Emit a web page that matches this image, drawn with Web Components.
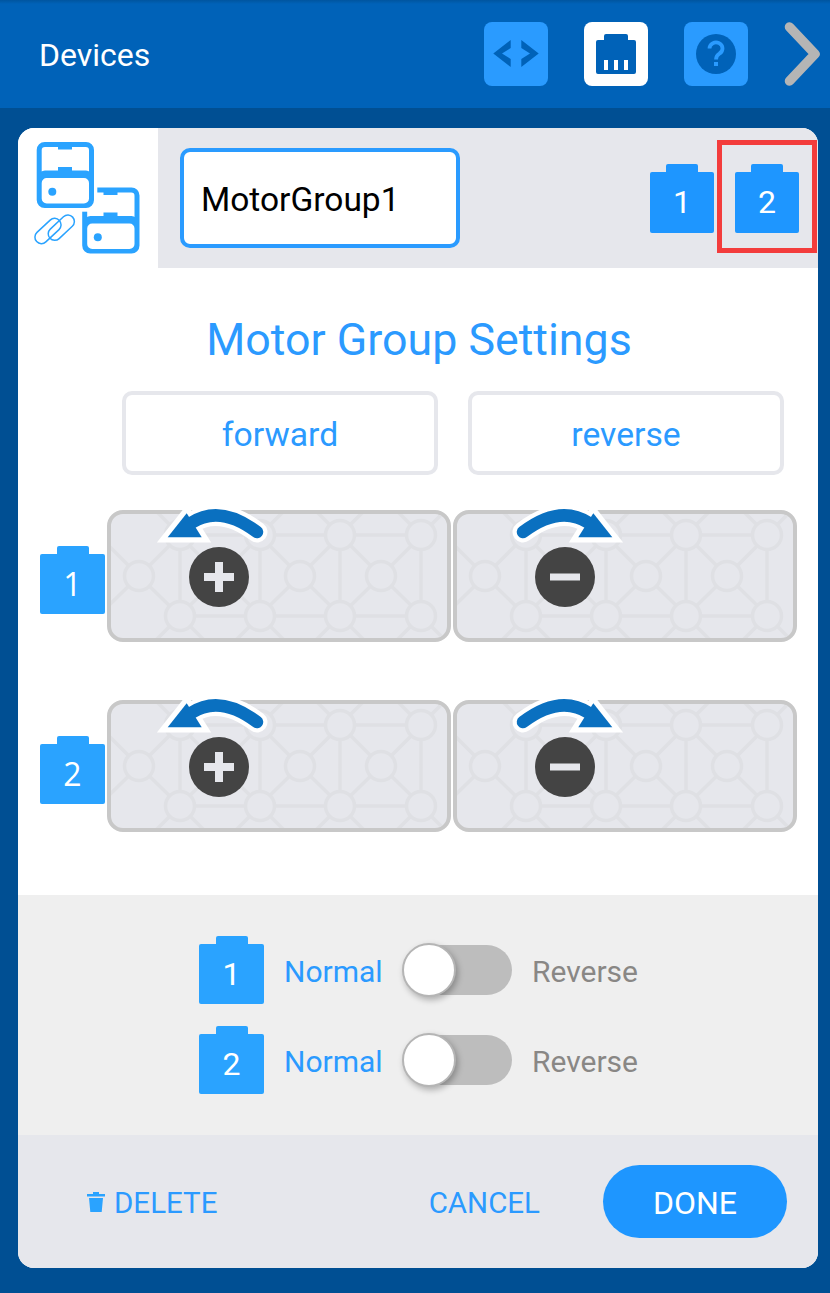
<!DOCTYPE html>
<html><head><meta charset="utf-8"><title>Devices</title>
<style>
html,body{margin:0;padding:0;background:#004f93;font-family:Roboto,sans-serif}
</style></head>
<body>
<x-app></x-app>
<script>
function def(name, html){
  customElements.define(name, class extends HTMLElement{
    connectedCallback(){
      if(this.shadowRoot) return;
      const r=this.attachShadow({mode:'open'});
      r.innerHTML=typeof html==='function'?html(this):html;
    }
  });
}
def('x-motor', el=>{
  const c=el.getAttribute('color')||'#2aa3ff';
  const f=el.getAttribute('font')||'Roboto';
  const w=el.getAttribute('w')||65;
  const h=+(el.getAttribute('h')||68);
  return `<style>
  :host{display:block;width:${w}px;height:${h}px;flex:none;font-family:${f},sans-serif}
  .nub{width:32px;height:9px;margin:0 auto -1px;background:${c};border-radius:2px 2px 0 0}
  .body{height:${h-8}px;background:${c};border-radius:2px;display:flex;align-items:center;justify-content:center;color:#fff;font-size:32px;line-height:1}
  span{display:block;margin-top:-1px}
  </style><div class="nub"></div><div class="body"><span><slot></slot></span></div>`;
});
def('x-topbar',`<style>
  :host{display:flex;align-items:center;height:108px;padding-left:39px;box-sizing:border-box;background:linear-gradient(#00559f 0,#0062b8 4px);color:#fff}
  .t{flex:1;font-size:32px;line-height:36px;margin-top:2px}
  .b{width:64px;height:64px;border-radius:8px;background:#2a9bff;margin-right:36px;flex:none}
  .b.on{background:#fff}
  svg{display:block}
  .chev{margin-right:10px;margin-left:-4px;flex:none}
</style>
<div class="t">Devices</div>
<div class="b"><svg width="64" height="64" viewBox="0 0 64 64"><path fill="#0062b8" d="M26.7 18 9.3 31.5 26.7 45V37L18 31.5 26.7 26ZM37.3 18 54.7 31.5 37.3 45V37L46 31.5 37.3 26Z"/></svg></div>
<div class="b on"><svg width="64" height="64" viewBox="0 0 64 64"><path fill="#0062b8" d="M22 12H42a2 2 0 0 1 2 2V18H50a2 2 0 0 1 2 2V50a2 2 0 0 1-2 2H14a2 2 0 0 1-2-2V20a2 2 0 0 1 2-2H20V14a2 2 0 0 1 2-2Z"/><path fill="#fff" d="M20 38h4v10h-4zM30 38h4v10h-4zM40 38h4v10h-4z"/></svg></div>
<div class="b"><svg width="64" height="64" viewBox="0 0 64 64"><circle cx="32" cy="32" r="20" fill="#0062b8"/><path fill="none" stroke="#2a9bff" stroke-width="3.800" d="M25.500 26.500a6.500 6 0 1 1 10 5c-2.400 1.600-3.500 2.500-3.500 6"/><rect x="30" y="40" width="4" height="4" fill="#2a9bff"/></svg></div>
<svg class="chev" width="40" height="64" viewBox="0 0 40 64"><path fill="none" stroke="#b5b5b5" stroke-width="9.500" stroke-linecap="round" stroke-linejoin="round" d="M9.500 5 35 32 9.500 59"/></svg>`);
const mot=`<path fill-rule="evenodd" d="M26.700 14H68a8 8 0 0 1 8 8V72a8 8 0 0 1-8 8H26.700a8 8 0 0 1-8-8V22a8 8 0 0 1 8-8ZM27 19a3.300 3.300 0 0 0-3.300 3.300V43.500Q24 43 27 42.500H40V39H54V42.500H68Q71 43 71 43.500V22.300A3.300 3.300 0 0 0 67.700 19H54V21.500H40V19ZM28.700 50a5 5 0 0 0-5 5V70.500a5 5 0 0 0 5 5H66a5 5 0 0 0 5-5V55a5 5 0 0 0-5-5Z"/><circle cx="34.300" cy="63.700" r="4"/>`;
def('x-grouphead',`<style>
  :host{display:flex;height:140px;position:relative;flex:none}
  .logo{width:140px;background:#fff;flex:none}
  svg{display:block}
  .rest{flex:1;background:#e6e7ec;display:flex;align-items:center;padding:0 19px 0 22px;gap:21px}
  .name{width:280px;height:100px;box-sizing:border-box;border:4px solid #2a9bff;border-radius:10px;background:#fff;display:flex;align-items:center;padding-left:17px;font-size:33.500px;color:#000;margin-right:auto}
  .name span{margin-top:2px}
  .red{position:absolute;left:699px;top:12px;width:100px;height:113px;box-sizing:border-box;border:5px solid #f33c3c}
</style>
<div class="logo"><svg width="140" height="140" viewBox="0 0 140 140">
 <g fill="#2aa3ff">
  <g transform="translate(45.500 45.500)">${mot}</g>
  <rect x="55" y="55" width="24.300" height="28.700" fill="#fff"/>
  ${mot}
 </g>
 <g fill="none" stroke="#2aa3ff" stroke-width="1.500">
  <rect x="-15.500" y="-6.500" width="31" height="13" rx="6.500" transform="translate(30 103) rotate(-43)"/>
  <rect x="-15.500" y="-6.500" width="31" height="13" rx="6.500" transform="translate(43.300 99.700) rotate(-43)"/>
 </g></svg></div>
<div class="rest"><div class="name"><span>MotorGroup1</span></div>
<x-motor color="#1e96ff" w="64" h="69">1</x-motor><x-motor color="#1e96ff" w="64" h="69">2</x-motor></div>
<div class="red"></div>`);
const pts=[[32,66],[113,66],[193,66],[274,66],[73,25],[153,25],[233,25],[314,25],[73,106],[153,106],[233,106],[314,106]];
let lines='';
[[73,25,153,25],[153,25,233,25],[233,25,314,25],[73,106,153,106],[153,106,233,106],[233,106,314,106],
 [73,25,73,106],[153,25,153,106],[233,25,233,106],[314,25,314,106]].forEach(l=>lines+=`M${l[0]} ${l[1]}L${l[2]} ${l[3]}`);
[[32,66],[113,66],[193,66],[274,66]].forEach(p=>{
  [[-41,-41],[41,-41],[-41,40],[41,40]].forEach(d=>lines+=`M${p[0]} ${p[1]}L${p[0]+d[0]} ${p[1]+d[1]}`);
});
[73,153,233,314].forEach(x=>{
  [[-30,-30],[30,-30]].forEach(d=>lines+=`M${x} 25L${x+d[0]} ${25+d[1]}`);
  [[-30,30],[30,30]].forEach(d=>lines+=`M${x} 106L${x+d[0]} ${106+d[1]}`);
});
const strokes=pts.map(p=>`<circle cx="${p[0]}" cy="${p[1]}" r="14.500" fill="#e6e7ec" stroke="#dfe0e4" stroke-width="3.500"/>`).join('');
def('x-panel', el=>{
  const minus=el.hasAttribute('minus');
  const arrow=`<path d="M150 22Q113-6 84 13" fill="none" stroke="#fff" stroke-width="21" stroke-linecap="round"/>
  <path d="M60.700 27.300 79.700 3.300 94.700 27.300Z" fill="#fff" stroke="#fff" stroke-width="10.500"/>
  <path d="M150 22Q113-6 84 13" fill="none" stroke="#0a70c0" stroke-width="12.500" stroke-linecap="round"/>
  <path d="M60.700 27.300 79.700 3.300 94.700 27.300Z" fill="#0a70c0"/>`;
  return `<style>
  :host{display:block;width:344px;height:132px;position:relative;box-sizing:border-box;border:4px solid #c8c8c8;border-radius:16px;background:#e6e7ec;flex:none}
  .clip{position:absolute;inset:0;overflow:hidden;border-radius:12px}
  svg{display:block;position:absolute;left:-4px;top:-4px;overflow:visible}
  </style>
  <div class="clip"><svg width="344" height="132" viewBox="0 0 344 132"><path d="${lines}" stroke="#dfe0e4" stroke-width="3.500" fill="none"/>${strokes}</svg></div>
  <svg width="344" height="132" viewBox="0 0 344 132">
   <g ${minus?'transform="translate(220 0) scale(-1 1)"':''}>${arrow}</g>
   <circle cx="112" cy="67" r="30" fill="#444"/>
   ${minus?'<rect x="97" y="63.500" width="30" height="7" fill="#e6e7ec"/>':'<path d="M108 52h8v11h11v8H116v11h-8V71H97v-8h11Z" fill="#e6e7ec"/>'}
  </svg>`;
});
def('x-motorrow', el=>`<style>
  :host{display:flex;align-items:center;height:132px;padding-left:22px;gap:2px}
  x-motor{margin-top:8px}
  </style><x-motor font="'Open Sans'">${el.getAttribute('n')}</x-motor><x-panel></x-panel><x-panel minus></x-panel>`);
def('x-settings',`<style>
  :host{display:block;height:627px;background:#fff;flex:none;box-sizing:border-box;padding-top:48px}
  h2{margin:0;padding-left:2px;font-weight:400;font-size:44.750px;line-height:48px;color:#2b9aff;text-align:center}
  .dir{display:flex;gap:30px;padding-left:104px;margin-top:27px;margin-bottom:35px}
  .dir div{width:316px;height:84px;box-sizing:border-box;border:4px solid #e6e7ec;border-radius:10px;display:flex;align-items:center;justify-content:center;font-size:33.700px;color:#2b9aff}
  .dir span{margin-top:2px}
  .gap{height:58px}
</style><h2>Motor Group Settings</h2>
<div class="dir"><div><span>forward</span></div><div><span>reverse</span></div></div>
<x-motorrow n="1"></x-motorrow><div class="gap"></div><x-motorrow n="2"></x-motorrow>`);
def('x-toggle', el=>`<style>
  :host{display:flex;align-items:center;height:68px;padding-left:181px;font-size:30px}
  span{margin-top:2px}
  .n{color:#2b9aff;margin-left:20px;width:98px;flex:none}
  .r{color:#898785;margin-left:20px}
  .sw{width:109px;height:50px;border-radius:25px;background:#bdbdbd;margin-left:21px;flex:none;position:relative}
  .k{position:absolute;left:-1px;top:-2px;width:54px;height:54px;box-sizing:border-box;border-radius:50%;background:#fff;border:2px solid #b5b5b5;box-shadow:2px 3px 6px rgba(0,0,0,.28)}
  </style><x-motor>${el.getAttribute('n')}</x-motor><span class="n">Normal</span><div class="sw"><div class="k"></div></div><span class="r">Reverse</span>`);
def('x-toggles',`<style>
  :host{display:flex;flex-direction:column;gap:22px;height:240px;box-sizing:border-box;padding-top:41px;background:#efefef;flex:none}
</style><x-toggle n="1"></x-toggle><x-toggle n="2"></x-toggle>`);
def('x-footer',`<style>
  :host{display:flex;align-items:center;flex:1;padding:0 31px 0 69px;background:#e6e7ec;font-size:29.500px;color:#2b9aff}
  .del{display:flex;align-items:center;gap:9px}
  svg{display:block}
  span{margin-top:2px}
  .can{margin-left:auto;margin-right:63px}
  .done{width:184px;height:73px;border-radius:37px;background:#1e96ff;color:#fff;display:flex;align-items:center;justify-content:center;font-size:32px}
</style><div class="del"><svg width="18" height="20" viewBox="0 0 18 20"><path fill="#2aa3ff" d="M6 0h6v2h6v2.500H0V2h6ZM2 6h14l-1.300 14H3.300Z"/></svg><span>DELETE</span></div>
<span class="can">CANCEL</span><div class="done"><span>DONE</span></div>`);
def('x-card',`<style>
  :host{display:flex;flex-direction:column;width:800px;height:1140px;margin:20px 12px 25px 18px;border-radius:16px;overflow:hidden;background:#fff}
</style><x-grouphead></x-grouphead><x-settings></x-settings><x-toggles></x-toggles><x-footer></x-footer>`);
def('x-app',`<style>
  :host{display:block;width:830px;height:1293px;background:#004f93;font-family:Roboto,sans-serif;overflow:hidden}
</style><x-topbar></x-topbar><x-card></x-card>`);
</script>
</body></html>
